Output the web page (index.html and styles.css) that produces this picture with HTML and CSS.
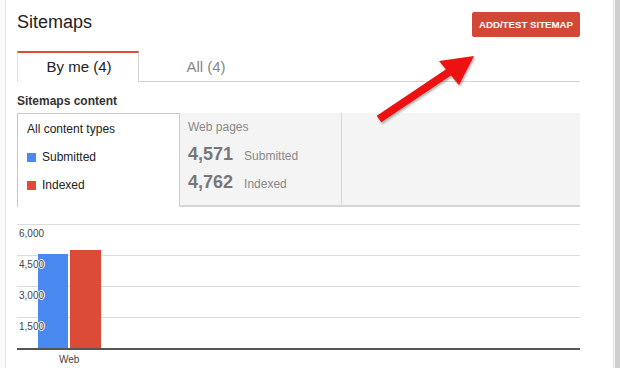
FILE: index.html
```html
<!DOCTYPE html>
<html lang="en">
<head>
  <meta charset="UTF-8" />
  <title>Sitemaps</title>
  <link rel="stylesheet" href="styles.css">
</head>
<body>
  <div class="page">
    <div class="main">
      <div class="header">
        <h1 class="title">Sitemaps</h1>
        <button class="btn-add">ADD/TEST SITEMAP</button>
      </div>

      <div class="tabs">
        <div class="tab tab-active">By me (4)</div>
        <div class="tab">All (4)</div>
      </div>

      <h2 class="section-title">Sitemaps content</h2>

      <div class="content-box">
        <div class="legend">
          <div class="legend-row">All content types</div>
          <div class="legend-row"><span class="swatch swatch-blue"></span>Submitted</div>
          <div class="legend-row"><span class="swatch swatch-red"></span>Indexed</div>
        </div>
        <div class="stats">
          <div class="stat-cell">
            <div class="stat-head">Web pages</div>
            <div class="stat-row"><span class="stat-num">4,571</span><span class="stat-label">Submitted</span></div>
            <div class="stat-row"><span class="stat-num">4,762</span><span class="stat-label">Indexed</span></div>
          </div>
          <div class="stat-cell stat-empty"></div>
        </div>
      </div>

      <div class="chart">
        <div class="plot">
          <div class="grid">
            <div class="grid-row"><span class="grid-label">6,000</span></div>
            <div class="grid-row"><span class="grid-label">4,500</span></div>
            <div class="grid-row"><span class="grid-label">3,000</span></div>
            <div class="grid-row"><span class="grid-label">1,500</span></div>
          </div>
          <div class="bars">
            <div class="bar bar-blue" style="height: 94px"></div>
            <div class="bar bar-red" style="height: 98px"></div>
          </div>
        </div>
        <div class="x-labels"><span class="x-label">Web</span></div>
      </div>

      <!-- annotation arrow drawn over the page -->
      <svg class="arrow" width="110" height="80" viewBox="0 0 110 80">
        <line x1="9" y1="69" x2="82" y2="20" stroke="#ee1111" stroke-width="8" />
        <polygon points="104,6 69,11 89,35" fill="#ee1111" />
      </svg>
    </div>
    <div class="rail"></div>
  </div>
</body>
</html>
```

FILE: styles.css
```css
html, body {
  margin: 0;
  background: #fafafa;
}
body {
  font-family: "Liberation Sans", Arial, sans-serif;
  color: #222;
}
.page {
  display: flex;
  height: 368px;
  padding-left: 5px;
  overflow: hidden;
}
.main {
  position: relative;
  width: 609px;
  box-sizing: border-box;
  padding: 11px 33px 0 11px;
  background: #fff;
  border-left: 1px solid #e6e6e6;
  border-right: 1px solid #e2e2e2;
}
.rail {
  flex: 1;
  background: #cfcfcf;
  border-left: 1px solid #f2f2f2;
}
.header {
  display: flex;
  justify-content: space-between;
  align-items: flex-start;
}
.title {
  margin: 0;
  font-size: 18px;
  line-height: 22px;
  font-weight: normal;
  color: #222;
}
.btn-add {
  margin-top: 1px;
  height: 25px;
  width: 108px;
  padding: 0;
  background: #d14836;
  border: none;
  border-radius: 2px;
  color: #fff;
  font-family: "Liberation Sans", Arial, sans-serif;
  font-size: 9.7px;
  font-weight: bold;
}
.tabs {
  display: flex;
  margin-top: 14px;
  border-bottom: 1px solid #d2d2d2;
}
.tab {
  width: 134px;
  height: 28px;
  line-height: 28px;
  text-align: center;
  font-size: 15px;
  color: #888;
  border-top: 2px solid transparent;
}
.tab-active {
  width: 122px;
  box-sizing: border-box;
  padding-left: 2px;
  color: #222;
  background: #fff;
  border-top: 2px solid #dd4b39;
  border-left: 1px solid #e0e0e0;
  border-right: 1px solid #d6d6d6;
  margin-bottom: -1px;
  height: 31px;
}
.section-title {
  margin: 12px 0 5px;
  font-size: 12px;
  line-height: 14px;
  font-weight: bold;
  color: #333;
}
.content-box {
  display: flex;
  height: 94px;
}
.legend {
  width: 152px;
  padding: 1px 0 0 9px;
  border-left: 1px solid #c8c8c8;
  border-top: 1px solid #c8c8c8;
  font-size: 12px;
  color: #222;
}
.legend-row {
  display: flex;
  align-items: center;
  height: 28px;
}
.swatch {
  width: 9px;
  height: 9px;
  margin: 1px 6px 0 0;
}
.swatch-blue, .bar-blue {
  background: #4a89f0;
}
.swatch-red, .bar-red {
  background: #dc4a38;
}
.stats {
  flex: 1;
  display: flex;
  background: #f4f4f4;
  border-left: 1px solid #cfcfcf;
  border-bottom: 2px solid #d6d6d6;
}
.stat-cell {
  width: 153px;
  padding: 1px 0 0 8px;
  border-right: 1px solid #d8d8d8;
}
.stat-empty {
  flex: 1;
  border-right: none;
}
.stat-head {
  height: 28px;
  line-height: 27px;
  font-size: 12px;
  color: #888;
}
.stat-row {
  display: flex;
  align-items: baseline;
  height: 28px;
  line-height: 25px;
}
.stat-num {
  font-size: 18px;
  font-weight: bold;
  color: #777;
  margin-right: 11px;
}
.stat-label {
  font-size: 12px;
  color: #888;
}
.chart {
  margin-top: 17px;
}
.plot {
  display: grid;
  border-bottom: 2px solid #555;
}
.grid, .bars {
  grid-area: 1 / 1;
}
.grid-row {
  box-sizing: border-box;
  height: 31px;
  border-top: 1px solid #dcdcdc;
  padding: 3px 0 0 2px;
  font-size: 10px;
  line-height: 12px;
}
.grid-label {
  position: relative;
  z-index: 2;
  color: #444;
  text-shadow: 1px 0 0 #fff, -1px 0 0 #fff, 0 1px 0 #fff, 0 -1px 0 #fff;
}
.bars {
  position: relative;
  z-index: 1;
  display: flex;
  align-items: flex-end;
  gap: 2px;
  padding-left: 21px;
}
.bar-blue {
  width: 30px;
}
.bar-red {
  width: 31px;
}
.x-labels {
  padding: 2px 0 0 42px;
  font-size: 10px;
  line-height: 16px;
  color: #444;
}
.arrow {
  position: absolute;
  left: 364px;
  top: 50px;
  filter: drop-shadow(1px 2px 1px rgba(0, 0, 0, 0.3));
}
```
